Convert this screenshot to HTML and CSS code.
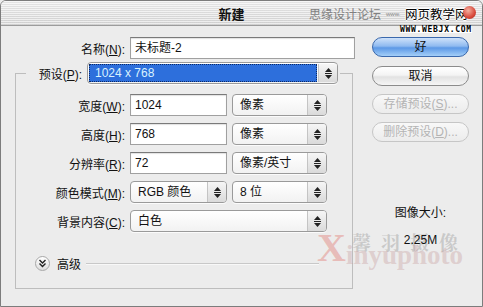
FILE: index.html
```html
<!DOCTYPE html>
<html lang="zh-CN">
<head>
<meta charset="utf-8">
<title>新建</title>
<link rel="stylesheet" href="styles.css">
</head>
<body>
<div class="window">
  <div class="titlebar">
    <span class="title">新建</span>
    <div class="wm-top">
      <span class="wm-forum">思缘设计论坛</span>
      <span class="wm-www">www.</span>
      <span class="wm-site">网页教学网</span>
      <span class="wm-url">WWW.WEBJX.COM</span>
      <span class="wm-ball"></span>
    </div>
  </div>
  <div class="content">
    <div class="form">
      <div class="row name-row">
        <span class="lbl lbl-name">名称(<u>N</u>):</span>
        <div class="text name-input">未标题-2</div>
      </div>
      <fieldset class="group">
        <legend class="preset">
          <span class="lbl lbl-preset">预设(<u>P</u>):</span>
          <div class="select sel-preset">
            <div class="focus-val">1024 x 768</div>
            <span class="step"><svg width="7" height="11" viewBox="0 0 7 11"><path d="M3.5 0L7 4H0z M3.5 11L0 7h7z" fill="#222"/><rect x="0" y="5" width="7" height="1" fill="#222"/></svg></span>
          </div>
        </legend>
        <div class="row first">
          <span class="lbl">宽度(<u>W</u>):</span>
          <div class="text num">1024</div>
          <div class="select unit"><span class="val">像素</span><span class="step"><svg width="7" height="11" viewBox="0 0 7 11"><path d="M3.5 0L7 4H0z M3.5 11L0 7h7z" fill="#222"/><rect x="0" y="5" width="7" height="1" fill="#222"/></svg></span></div>
        </div>
        <div class="row">
          <span class="lbl">高度(<u>H</u>):</span>
          <div class="text num">768</div>
          <div class="select unit"><span class="val">像素</span><span class="step"><svg width="7" height="11" viewBox="0 0 7 11"><path d="M3.5 0L7 4H0z M3.5 11L0 7h7z" fill="#222"/><rect x="0" y="5" width="7" height="1" fill="#222"/></svg></span></div>
        </div>
        <div class="row">
          <span class="lbl">分辨率(<u>R</u>):</span>
          <div class="text num">72</div>
          <div class="select unit"><span class="val">像素/英寸</span><span class="step"><svg width="7" height="11" viewBox="0 0 7 11"><path d="M3.5 0L7 4H0z M3.5 11L0 7h7z" fill="#222"/><rect x="0" y="5" width="7" height="1" fill="#222"/></svg></span></div>
        </div>
        <div class="row">
          <span class="lbl">颜色模式(<u>M</u>):</span>
          <div class="select mode"><span class="val">RGB 颜色</span><span class="step"><svg width="7" height="11" viewBox="0 0 7 11"><path d="M3.5 0L7 4H0z M3.5 11L0 7h7z" fill="#222"/><rect x="0" y="5" width="7" height="1" fill="#222"/></svg></span></div>
          <div class="select unit"><span class="val">8 位</span><span class="step"><svg width="7" height="11" viewBox="0 0 7 11"><path d="M3.5 0L7 4H0z M3.5 11L0 7h7z" fill="#222"/><rect x="0" y="5" width="7" height="1" fill="#222"/></svg></span></div>
        </div>
        <div class="row">
          <span class="lbl">背景内容(<u>C</u>):</span>
          <div class="select bg"><span class="val">白色</span><span class="step"><svg width="7" height="11" viewBox="0 0 7 11"><path d="M3.5 0L7 4H0z M3.5 11L0 7h7z" fill="#222"/><rect x="0" y="5" width="7" height="1" fill="#222"/></svg></span></div>
        </div>
        <div class="adv">
          <span class="disc"><svg width="9" height="9" viewBox="0 0 9 9"><path d="M1.5 1l3 3 3-3M1.5 4.5l3 3 3-3" fill="none" stroke="#222" stroke-width="1.4"/></svg></span>
          <span class="adv-text">高级</span>
          <span class="rule"></span>
        </div>
      </fieldset>
    </div>
    <div class="side">
      <div class="btn ok">好</div>
      <div class="btn">取消</div>
      <div class="btn disabled">存储预设(<u>S</u>)...</div>
      <div class="btn disabled">删除预设(<u>D</u>)...</div>
      <div class="info">图像大小:</div>
      <div class="info size">2.25M</div>
    </div>
  </div>
  <div class="wm-bottom">
    <span class="wm-cn">馨羽摄像</span>
    <span class="wm-x">X</span>
    <span class="wm-en">inyuphoto</span>
  </div>
</div>
</body>
</html>
```
FILE: styles.css
```css
html, body {
  margin: 0;
  padding: 0;
  background: #ececec;
}
body {
  font-family: "Liberation Sans", "Noto Sans CJK SC", sans-serif;
  font-size: 12px;
  color: #111;
}
u { text-decoration: underline; }

.window {
  position: relative;
  box-sizing: border-box;
  width: 483px;
  height: 307px;
  border: 1px solid #7c7c7c;
  border-radius: 6px 6px 0 0;
  background: #ececec;
  overflow: hidden;
}

.titlebar {
  position: relative;
  height: 24px;
  border-bottom: 1px solid #9c9c9c;
  background:
    repeating-linear-gradient(to bottom, rgba(255,255,255,0.55) 0 1px, rgba(0,0,0,0.03) 1px 2px),
    linear-gradient(#ececec, #d6d6d6);
  display: flex;
  align-items: center;
  justify-content: center;
  padding-right: 20px;
}
.title {
  font-weight: bold;
  font-size: 13px;
  color: #111;
}

.wm-top {
  position: absolute;
  left: 306px;
  top: 0;
  width: 176px;
  height: 34px;
}
.wm-forum {
  position: absolute;
  left: 2px;
  top: 4px;
  font-size: 12px;
  color: #808080;
  font-family: "Noto Sans CJK SC", sans-serif;
}
.wm-www {
  position: absolute;
  left: 79px;
  top: 10px;
  font-size: 6px;
  color: #888;
}
.wm-site {
  position: absolute;
  left: 98px;
  top: 3px;
  font-size: 12.5px;
  color: #000;
  font-family: "Noto Sans CJK SC", sans-serif;
  text-shadow: 1px 0 #fff, -1px 0 #fff, 0 1px #fff, 0 -1px #fff;
}
.wm-url {
  position: absolute;
  left: 93px;
  top: 25px;
  font-size: 8px;
  font-weight: bold;
  font-family: "DejaVu Sans Mono", monospace;
  letter-spacing: 0.7px;
  color: #000;
  line-height: 7px;
  background: #fff;
}
.wm-ball {
  position: absolute;
  left: 156px;
  top: 5px;
  width: 13px;
  height: 13px;
  border-radius: 50%;
  background: radial-gradient(circle at 40% 35%, #f4b0a0, #d8483a 60%, #a02a20);
}

.content {
  display: flex;
  padding-top: 11px;
}
.form {
  width: 354px;
  padding-left: 14px;
  box-sizing: border-box;
}
.row {
  display: flex;
  align-items: center;
  height: 22px;
  margin-top: 7px;
}
.row.first { margin-top: 10px; }
.name-row { margin-top: 0; }
.lbl {
  width: 109px;
  text-align: right;
  margin-right: 5px;
  flex: none;
  white-space: nowrap;
}
.lbl-name { width: 110px; }
.lbl-preset { width: 54px; }

.text {
  box-sizing: border-box;
  height: 22px;
  background: #fff;
  border: 1px solid #a0a0a0;
  border-top-color: #7a7a7a;
  box-shadow: inset 0 1px 1px rgba(0,0,0,0.12);
  padding-left: 4px;
  line-height: 20px;
}
.name-input { width: 225px; }
.num { width: 97px; margin-right: 5px; }

.select {
  box-sizing: border-box;
  height: 22px;
  display: flex;
  border: 1px solid #9a9a9a;
  border-radius: 4px;
  background: linear-gradient(#ffffff, #f2f2f2);
  box-shadow: 0 1px 0 rgba(255,255,255,0.8);
  overflow: hidden;
}
.select .val {
  flex: 1;
  padding-left: 7px;
  line-height: 20px;
  white-space: nowrap;
}
.select .step {
  flex: none;
  width: 18px;
  border-left: 1px solid #c4c4c4;
  background: linear-gradient(#f6f6f6, #dadada);
  display: flex;
  align-items: center;
  justify-content: center;
}
.unit { width: 95px; }
.mode { width: 97px; margin-right: 5px; }
.bg { width: 197px; }

.group {
  box-sizing: border-box;
  width: 338px;
  margin: 3px 0 0 0;
  padding: 0 0 15px 0;
  border: 1px solid #bdbdbd;
  min-inline-size: 0;
}
.preset {
  margin-left: 10px;
  padding: 0 2px;
  display: flex;
  align-items: center;
  height: 22px;
}
.sel-preset {
  width: 251px;
  padding: 1px 0 1px 1px;
}
.focus-val {
  flex: 1;
  margin-right: 1px;
  background: #2d6fdc;
  border: 1px dotted #0b2a66;
  color: #d9f2ff;
  padding-left: 5px;
  line-height: 16px;
  font-size: 12px;
}

.adv {
  display: flex;
  align-items: center;
  height: 20px;
  margin-top: 21px;
  padding-left: 19px;
  margin-right: 33px;
}
.disc {
  box-sizing: border-box;
  width: 15px;
  height: 15px;
  border-radius: 50%;
  border: 1px solid #a8a8a8;
  background: linear-gradient(#ffffff, #dedede);
  display: flex;
  align-items: center;
  justify-content: center;
}
.adv-text { margin-left: 7px; }
.rule {
  flex: 1;
  height: 1px;
  background: #c8c8c8;
  margin-left: 5px;
  box-shadow: 0 1px 0 #f8f8f8;
}

.side {
  width: 97px;
  margin-left: 17px;
  display: flex;
  flex-direction: column;
}
.btn {
  box-sizing: border-box;
  height: 20px;
  border-radius: 10px;
  border: 1px solid #8c8c8c;
  background: linear-gradient(#ffffff 0%, #f4f4f4 45%, #e2e2e2 55%, #f6f6f6 100%);
  text-align: center;
  line-height: 18px;
  margin-bottom: 8px;
  white-space: nowrap;
}
.btn.ok {
  border-color: #3a68ac;
  background: linear-gradient(#cfe2fa 0%, #8fbaf0 45%, #5c98e6 55%, #a4cff8 100%);
  margin-bottom: 9px;
}
.btn.disabled {
  border-color: #c6c6c6;
  color: #b4b4b4;
  background: linear-gradient(#f8f8f8, #ececec);
}
.info {
  text-align: center;
  margin-top: 56px;
  line-height: 14px;
  position: relative;
  z-index: 2;
}
.info.size { margin-top: 13px; }

.wm-bottom {
  position: absolute;
  left: 316px;
  top: 226px;
  width: 160px;
  height: 40px;
  pointer-events: none;
  z-index: 1;
}
.wm-cn {
  position: absolute;
  left: 35px;
  top: 1px;
  font-family: "Noto Serif CJK SC", "Noto Sans CJK SC", serif;
  font-weight: bold;
  font-size: 19px;
  letter-spacing: 10px;
  color: rgba(150,150,150,0.42);
  white-space: nowrap;
}
.wm-x {
  position: absolute;
  left: 0;
  top: -3px;
  font-family: "Liberation Serif", serif;
  font-weight: bold;
  font-size: 40px;
  color: rgba(225,110,100,0.38);
}
.wm-en {
  position: absolute;
  left: 29px;
  top: 13px;
  font-family: "Liberation Serif", serif;
  font-weight: bold;
  font-size: 27px;
  letter-spacing: 0;
  color: rgba(200,160,160,0.4);
  white-space: nowrap;
}
```
